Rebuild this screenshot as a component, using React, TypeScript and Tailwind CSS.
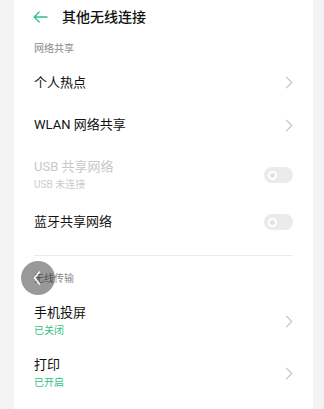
import React from 'react';

const GREEN = '#36bf86';

function Chevron() {
  return (
    <svg width="8" height="13" viewBox="0 0 8 13" fill="none" className="shrink-0">
      <path d="M1.5 1.2l5.2 5.3-5.2 5.3" stroke="#c3c3c3" strokeWidth="1.1" strokeLinecap="round" strokeLinejoin="round" />
    </svg>
  );
}

function Toggle() {
  return (
    <div className="flex h-[16px] w-[29px] shrink-0 items-center rounded-full bg-[#ebebeb] pl-[4px]">
      <div className="h-[9px] w-[9px] rounded-full border-2 border-white bg-[#e2e2e2]" />
    </div>
  );
}

function SectionLabel({ text, className }: { text: string; className: string }) {
  return (
    <div className={`flex items-center text-[10px] leading-[14px] text-[#8a8a8a] ${className}`}>{text}</div>
  );
}

export default function App() {
  return (
    <div
      className="h-[409px] w-full overflow-hidden bg-[#f3f3f3]"
      style={{ fontFamily: 'Roboto, "Noto Sans CJK SC", sans-serif' }}
    >
      <div className="relative ml-[14px] mr-[11px] h-full bg-white px-5">
        {/* header */}
        <div className="flex h-[33px] items-center">
          <svg width="15" height="12" viewBox="0 0 15 12" fill="none" className="-ml-[1px]">
            <path d="M14 6H1.2M6.2 1L1.2 6l5 5" stroke={GREEN} strokeWidth="1.3" strokeLinecap="round" strokeLinejoin="round" />
          </svg>
          <span className="ml-[14px] text-[14px] font-medium leading-[20px] text-[#111]">其他无线连接</span>
        </div>

        <SectionLabel text="网络共享" className="h-[29px] pt-[3px]" />

        <div className="flex h-[41px] items-center justify-between">
          <span className="text-[13px] leading-[18px] text-[#111]">个人热点</span>
          <Chevron />
        </div>

        <div className="flex h-[44px] items-center justify-between">
          <span className="text-[13px] leading-[18px] text-[#111]">WLAN 网络共享</span>
          <Chevron />
        </div>

        <div className="flex h-[56px] items-center justify-between">
          <div className="flex flex-col gap-[2px]">
            <span className="text-[13px] leading-[18px] text-[#c8c8c8]">USB 共享网络</span>
            <span className="text-[10px] leading-[14px] text-[#cdcdcd]">USB 未连接</span>
          </div>
          <Toggle />
        </div>

        <div className="flex h-[38px] items-center justify-between">
          <span className="text-[13px] leading-[18px] text-[#111]">蓝牙共享网络</span>
          <Toggle />
        </div>

        <div className="h-[14px]" />
        <div className="h-px bg-[#ebebeb]" />

        <SectionLabel text="无线传输" className="h-[40px] pt-[6px]" />

        <div className="flex h-[50px] items-center justify-between">
          <div className="flex flex-col gap-[2px]">
            <span className="text-[13px] leading-[18px] text-[#111]">手机投屏</span>
            <span className="text-[10px] leading-[14px]" style={{ color: GREEN }}>已关闭</span>
          </div>
          <Chevron />
        </div>

        <div className="flex h-[54px] items-center justify-between">
          <div className="flex flex-col gap-[2px]">
            <span className="text-[13px] leading-[18px] text-[#111]">打印</span>
            <span className="text-[10px] leading-[14px]" style={{ color: GREEN }}>已开启</span>
          </div>
          <Chevron />
        </div>

        {/* floating back bubble */}
        <div className="absolute left-[7px] top-[261px] flex h-[34px] w-[34px] items-center justify-center rounded-full bg-black/40">
          <svg width="8" height="14" viewBox="0 0 8 14" fill="none" className="-ml-[2px]">
            <path d="M6.5 1L1.5 7l5 6" stroke="#fff" strokeWidth="1.4" strokeLinecap="round" strokeLinejoin="round" />
          </svg>
        </div>
      </div>
    </div>
  );
}
